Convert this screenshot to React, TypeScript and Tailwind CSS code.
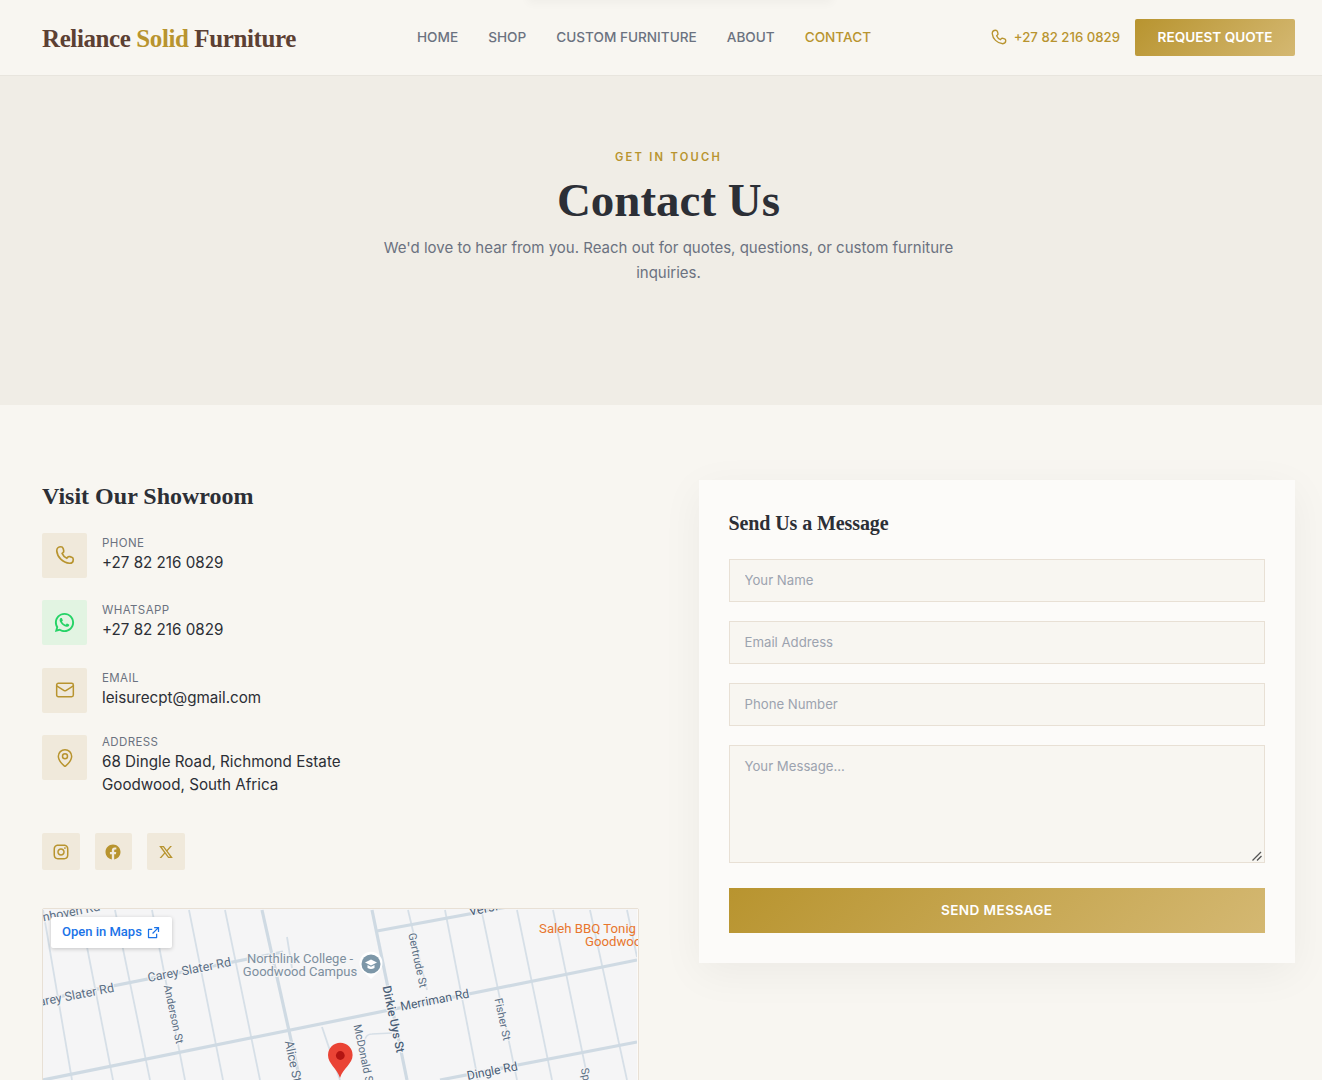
import { Mail, MapPin } from "lucide-react"
import { RiWhatsappLine, RiFacebookCircleFill, RiTwitterXLine, RiExternalLinkLine, RiInstagramLine } from "react-icons/ri"

const navLinks = ["HOME", "SHOP", "CUSTOM FURNITURE", "ABOUT"]

const thinRoads = [
  [43, 910, 72, 1080], [87, 947, 113, 1080], [115, 910, 150, 1080], [152, 910, 185, 1080],
  [189, 910, 223, 1080], [225, 910, 260, 1080], [322, 1027, 340, 1080], [408, 910, 427, 990],
  [445, 910, 478, 1080], [482, 913, 517, 1080], [517, 910, 552, 1080], [553, 910, 588, 1080],
  [590, 910, 627, 1080], [627, 910, 637, 957], [287, 937, 292, 968],
]

const thickRoads = [
  [43, 1080, 637, 960], [43, 1000, 283, 952], [377, 931, 507, 907], [440, 1080, 637, 1042],
  [262, 910, 300, 1080], [372, 910, 407, 1080],
]

const labels = [
  { t: "nhoven Rd", x: 72, y: 916, r: -11, c: "#5b6f85" },
  { t: "arey Slater Rd", x: 77, y: 999, r: -11, c: "#5b6f85" },
  { t: "Carey Slater Rd", x: 190, y: 974, r: -11, c: "#5b6f85" },
  { t: "Anderson St", x: 170, y: 1015, r: 78, c: "#5b6f85", s: 11 },
  { t: "Alice St", x: 289, y: 1062, r: 78, c: "#5b6f85" },
  { t: "Gertrude St", x: 414, y: 961, r: 78, c: "#5b6f85", s: 11 },
  { t: "Dirkie Uys St", x: 389.5, y: 1020, r: 78, c: "#4b5f78", w: 500, s: 12 },
  { t: "McDonald St", x: 360, y: 1056, r: 78, c: "#5b6f85", s: 11 },
  { t: "Merriman Rd", x: 435.5, y: 1004, r: -11, c: "#4b5f78", s: 12.2 },
  { t: "Fisher St", x: 499, y: 1020, r: 78, c: "#5b6f85", s: 11 },
  { t: "Dingle Rd", x: 493, y: 1075, r: -11, c: "#4b5f78", s: 12.2 },
  { t: "Versi", x: 484, y: 913, r: -11, c: "#4b5f78", s: 13 },
  { t: "Sp", x: 582, y: 1075, r: 78, c: "#5b6f85", s: 11 },
]

function PhoneIcon({ className }: { className: string }) {
  return (
    <svg viewBox="0 0 24 24" fill="none" stroke="currentColor" strokeWidth="1.8" strokeLinejoin="round" className={className}>
      <path d="M7.5 3 C9 3 9.6 3.8 10 5 L10.6 7.2 C10.9 8.3 10.5 9 9.6 9.7 L8.8 10.3 C10 13 11.5 14.6 14 15.6 L14.8 14.6 C15.5 13.7 16.3 13.5 17.3 13.8 L19.4 14.5 C20.6 14.9 21 15.7 21 16.8 C21 19.3 19.3 21 17 21 C9.5 20.5 3.5 14 3 7.5 C3 5 5 3 7.5 3 Z" />
    </svg>
  )
}

function MapView() {
  return (
    <div className="relative h-[350px] overflow-hidden rounded-[2px] border border-[#e8e0d5] bg-[#f5f5f6]">
      <svg width="595" height="350" viewBox="43 909 595 350" className="block">
        <rect x="43" y="909" width="595" height="350" fill="#f5f5f6" />
        {thinRoads.map(([a, b, c, d], i) => (
          <line key={i} x1={a} y1={b} x2={c} y2={d} stroke="#d6dfe7" strokeWidth="1.8" />
        ))}
        {thickRoads.map(([a, b, c, d], i) => (
          <line key={i} x1={a} y1={b} x2={c} y2={d} stroke="#cfdae3" strokeWidth="3.2" />
        ))}
        <path d="M365 1040 Q366 1034 372 1034 L392 1033" fill="none" stroke="#d6dfe7" strokeWidth="1.5" />
        <rect x="637" y="909" width="2" height="171" fill="#fbfaf8" />
        {labels.map((l) => (
          <text
            key={l.t}
            x={l.x}
            y={l.y}
            textAnchor="middle"
            transform={`rotate(${l.r} ${l.x} ${l.y})`}
            fontFamily="Roboto, sans-serif"
            fontSize={l.s ?? 12.5}
            fontWeight={l.w ?? 400}
            fill={l.c}
            stroke="#f5f5f6"
            strokeWidth="2"
            paintOrder="stroke"
          >
            {l.t}
          </text>
        ))}
        <text x="300" y="963" textAnchor="middle" fontFamily="Roboto, sans-serif" fontSize="13" fill="#7d8f9e" stroke="#f5f5f6" strokeWidth="2" paintOrder="stroke">
          Northlink College -
        </text>
        <text x="300" y="976" textAnchor="middle" fontFamily="Roboto, sans-serif" fontSize="13" fill="#7d8f9e" stroke="#f5f5f6" strokeWidth="2" paintOrder="stroke">
          Goodwood Campus
        </text>
        <text x="636" y="933" textAnchor="end" fontFamily="Roboto, sans-serif" fontSize="13.2" fill="#e8762d">
          Saleh BBQ Tonig
        </text>
        <text x="585" y="946" fontFamily="Roboto, sans-serif" fontSize="13.2" fill="#e8762d">
          Goodwoo
        </text>
        {/* school pin */}
        <path d="M371 979 L365 973 A11.5 11.5 0 1 1 377 973 Z" fill="#fff" />
        <circle cx="371" cy="964" r="9.5" fill="#7d97a8" />
        <path d="M365 962.5 L371 959.5 L377 962.5 L371 965.5 Z" fill="#fff" />
        <path d="M367.5 965 L367.5 968 Q371 970 374.5 968 L374.5 965 L371 966.8 Z" fill="#fff" />
        {/* red marker */}
        <path d="M340 1078 C337 1068 328 1064 328 1055 A12.3 12.3 0 0 1 352.6 1055 C352.6 1064 343 1068 340 1078 Z" fill="#ea4335" />
        <circle cx="340.3" cy="1055.5" r="4.4" fill="#b31412" />
      </svg>
      <a className="absolute left-[8px] top-[8px] flex h-[31px] w-[121px] items-center gap-[4px] rounded-[2px] bg-white pb-[2px] pl-[11px] text-[13px] font-medium text-[#1a73e8] shadow-[0_1px_4px_rgba(0,0,0,0.2)] [font-family:Roboto,sans-serif]">
        Open in Maps
        <RiExternalLinkLine className="mt-[2px] h-[15px] w-[15px]" />
      </a>
    </div>
  )
}

const tile = "flex h-[45px] w-[45px] shrink-0 items-center justify-center rounded-[2px]"

function ContactRow({ label, lines, icon, tileColor, textClass }: { label: string; lines: string[]; icon: React.ReactNode; tileColor: string; textClass: string }) {
  return (
    <div className="flex gap-[15px]">
      <div className={`${tile} ${tileColor}`}>{icon}</div>
      <div className={textClass}>
        <div className="text-[11.5px] leading-[15px] tracking-[0.4px] text-[#6b7280]">{label}</div>
        {lines.map((line) => (
          <div key={line} className="text-[15.2px] leading-[23px] text-[#2c2f36]">{line}</div>
        ))}
      </div>
    </div>
  )
}

export default function App() {
  return (
    <div className="relative h-[1080px] overflow-hidden bg-[#f8f6f1] [font-family:Inter,sans-serif]">
      <div className="absolute left-[530px] top-[-6px] h-[6px] w-[300px] rounded-full shadow-[0_0_8px_4px_rgba(0,0,0,0.03)]" />

      <header className="flex h-[76px] items-center justify-between border-b border-[#e8e5de] pl-[42px] pr-[27px]">
        <div className="pt-[3px] text-[25px] font-bold tracking-[-0.4px] text-[#5c4033] [font-family:'Liberation_Serif',serif]">
          Reliance <span className="text-[#b8942f]">Solid</span> Furniture
        </div>
        <nav className="absolute left-[417px] flex gap-[30px] text-[13.6px] font-medium text-[#6b7280]">
          {navLinks.map((n) => (
            <span key={n}>{n}</span>
          ))}
          <span className="text-[#b8942f]">CONTACT</span>
        </nav>
        <div className="flex items-center gap-[15px]">
          <div className="flex items-center gap-[6px] text-[13.2px] font-medium text-[#b8942f]">
            <PhoneIcon className="h-[18px] w-[18px]" />
            +27 82 216 0829
          </div>
          <button className="flex h-[37px] w-[160px] items-center justify-center rounded-[2px] bg-[linear-gradient(135deg,#b8942f,#d4b872)] text-[13.6px] font-semibold text-white">
            REQUEST QUOTE
          </button>
        </div>
      </header>

      <section className="h-[329px] w-full bg-[#f0ede6] pt-[74px]">
        <div className="ml-[15px] flex w-[1307px] flex-col items-center text-center">
          <div className="text-[11.2px] font-semibold leading-[14px] tracking-[2.24px] text-[#b8942f]">GET IN TOUCH</div>
          <h1 className="mt-[7px] text-[47px] font-bold leading-[58px] text-[#2c2f36] [font-family:'Liberation_Serif',serif]">Contact Us</h1>
          <p className="mt-[6px] w-[600px] text-[15px] leading-[25px] text-[#6b7280]">
            We'd love to hear from you. Reach out for quotes, questions, or custom furniture inquiries.
          </p>
        </div>
      </section>

      <main className="ml-[42px] grid w-[1253px] grid-cols-2 gap-[60px] pt-[75px]">
        <div>
          <h2 className="text-[24px] font-bold leading-[32px] text-[#2c2f36] [font-family:'Liberation_Serif',serif]">Visit Our Showroom</h2>
          <div className="mt-[20.8px] flex flex-col gap-[22.5px]">
            <ContactRow label="PHONE" lines={["+27 82 216 0829"]} tileColor="bg-[#f0e9db] text-[#b8942f]" textClass="pt-[3px]" icon={<PhoneIcon className="h-[22px] w-[22px]" />} />
            <ContactRow label="WHATSAPP" lines={["+27 82 216 0829"]} tileColor="bg-[#e2f4e2] text-[#25d366]" textClass="pt-[3px]" icon={<RiWhatsappLine className="h-[23px] w-[23px]" />} />
            <ContactRow label="EMAIL" lines={["leisurecpt@gmail.com"]} tileColor="bg-[#f0e9db] text-[#b8942f]" textClass="pt-[3px]" icon={<Mail className="h-[20px] w-[20px]" strokeWidth={1.8} />} />
            <ContactRow label="ADDRESS" lines={["68 Dingle Road, Richmond Estate", "Goodwood, South Africa"]} tileColor="bg-[#f0e9db] text-[#b8942f]" textClass="pt-0" icon={<MapPin className="h-[20px] w-[20px]" strokeWidth={1.8} />} />
          </div>
          <div className="mt-[37px] flex gap-[15px]">
            <div className="flex h-[37px] w-[37.5px] items-center justify-center rounded-[2px] bg-[#f0e9db] text-[#b8942f]"><RiInstagramLine className="h-[18px] w-[18px]" /></div>
            <div className="flex h-[37px] w-[37.5px] items-center justify-center rounded-[2px] bg-[#f0e9db] text-[#b8942f]"><RiFacebookCircleFill className="h-[18px] w-[18px]" /></div>
            <div className="flex h-[37px] w-[37.5px] items-center justify-center rounded-[2px] bg-[#f0e9db] text-[#b8942f]"><RiTwitterXLine className="h-[16px] w-[16px]" /></div>
          </div>
          <div className="mt-[38px]">
            <MapView />
          </div>
        </div>

        <div className="h-[483px] bg-[#fcfbf9] p-[30px] shadow-[0_10px_40px_rgba(0,0,0,0.05)]">
          <h3 className="text-[20px] font-bold leading-[26px] tracking-[-0.1px] text-[#2c2f36] [font-family:'Liberation_Serif',serif]">Send Us a Message</h3>
          <form className="mt-[23px] flex flex-col gap-[19px]">
            {["Your Name", "Email Address", "Phone Number"].map((p) => (
              <input key={p} placeholder={p} className="h-[43px] border border-[#e8e0d5] bg-[#f8f6f1] px-[15px] pb-[2px] text-[13.2px] outline-none placeholder:text-[#9ca3af]" />
            ))}
            <div className="relative flex">
              <textarea placeholder="Your Message..." className="h-[118px] w-full resize-none border border-[#e8e0d5] bg-[#f8f6f1] px-[15px] py-[11px] text-[13.2px] outline-none placeholder:text-[#9ca3af]" />
              <svg width="10" height="10" viewBox="0 0 10 10" className="absolute bottom-[2px] right-[3px]">
                <path d="M0.5 9.5 L9 1 M5 9.5 L9.5 5" stroke="#555" strokeWidth="1.3" fill="none" />
              </svg>
            </div>
            <button type="button" className="mt-[6px] h-[45px] bg-[linear-gradient(135deg,#b8942f,#d4b872)] text-[13.6px] font-semibold tracking-[0.4px] text-white">
              SEND MESSAGE
            </button>
          </form>
        </div>
      </main>
    </div>
  )
}
